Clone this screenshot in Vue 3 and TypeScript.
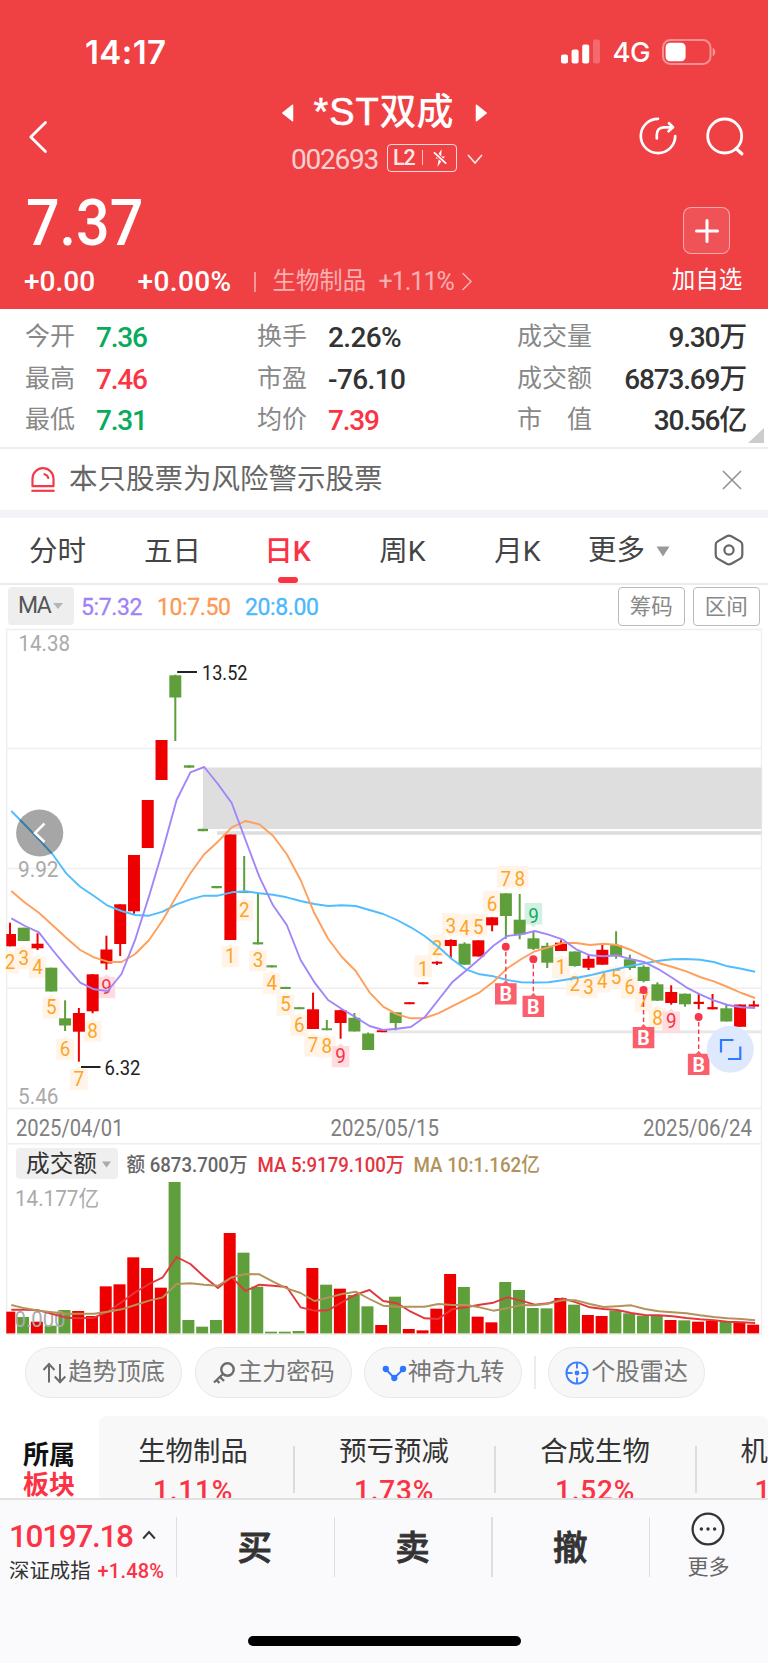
<script setup lang="ts">
type Tone = 'up' | 'down'
// open/close box with wick: [tone, wickTop, bodyTop, bodyBottom, wickBottom]
type Candle = ['r' | 'g', number, number, number, number]

const STEP = 13.775
const candleX = (i: number): number => 10 + i * STEP
const barX = (i: number): number => 9.3 + i * STEP
const lineX = (i: number): number => 11.3 + i * STEP

const stats: { label: string; value: string; tone?: Tone }[][] = [
  [
    { label: '今开', value: '7.36', tone: 'down' },
    { label: '最高', value: '7.46', tone: 'up' },
    { label: '最低', value: '7.31', tone: 'down' },
  ],
  [
    { label: '换手', value: '2.26%' },
    { label: '市盈', value: '-76.10' },
    { label: '均价', value: '7.39', tone: 'up' },
  ],
  [
    { label: '成交量', value: '9.30万' },
    { label: '成交额', value: '6873.69万' },
    { label: '市　值', value: '30.56亿' },
  ],
]

const tabs = ['分时', '五日', '日K', '周K', '月K']
const activeTab = '日K'

const candles: Candle[] = [
  ['r', 922.7, 934, 946.3, 946.3], ['g', 927.7, 927.7, 941, 941], ['r', 933.3, 943.7, 948.3, 950],
  ['g', 967.7, 967.7, 991.5, 991.5], ['g', 1000.3, 1018.3, 1025.5, 1031], ['r', 1008, 1013, 1031.7, 1061.7],
  ['r', 974, 974.3, 1011.3, 1013.3], ['r', 935.7, 949.5, 963.5, 969.7], ['r', 904.3, 904.3, 944, 956],
  ['r', 855, 855, 911.3, 914.3], ['r', 800, 800, 848, 848], ['r', 740, 740, 780, 780],
  ['g', 674.7, 675.3, 697.5, 741], ['g', 765.3, 765.3, 767.7, 767.7], ['g', 828.8, 828.8, 831.2, 831.2],
  ['g', 886, 886, 888.2, 888.2], ['r', 834.5, 834.5, 940, 940], ['g', 856, 891.3, 893, 893],
  ['g', 892.7, 942.2, 944.4, 944.4], ['g', 965.3, 965.3, 967.4, 967.4], ['g', 986.9, 986.9, 989, 989],
  ['g', 1007.2, 1007.2, 1009.2, 1009.2], ['r', 992.7, 1009.3, 1029, 1029], ['g', 1020, 1028.3, 1030.2, 1030.2],
  ['r', 1009.7, 1010.2, 1023, 1038.7], ['g', 1013, 1017.8, 1031.5, 1031.5], ['g', 1032.5, 1033.5, 1050, 1050],
  ['r', 1030, 1030.3, 1032.2, 1032.2], ['g', 1012.3, 1012.3, 1023, 1030.3], ['r', 1002.2, 1002.2, 1004.2, 1004.2],
  ['r', 982.2, 982.2, 984.2, 984.2], ['r', 961.3, 961.7, 963.7, 965], ['r', 939.3, 940, 946, 958.3],
  ['g', 942.3, 943.7, 964.7, 964.7], ['r', 940.3, 940.3, 956.5, 956.5], ['r', 917.3, 917.3, 925.3, 931.3],
  ['g', 893.3, 893.3, 916, 938.8], ['g', 894, 919.7, 934.5, 939.3], ['g', 931.7, 938.3, 948.8, 950],
  ['g', 942.7, 945.8, 962.7, 968], ['r', 940.3, 942.7, 951, 951], ['g', 951.5, 951.5, 966, 966.7],
  ['r', 955, 958.8, 967.7, 970], ['r', 944.3, 949.8, 964.7, 964.7], ['g', 931.3, 945, 956.3, 958.7],
  ['g', 954.7, 959.3, 968, 970], ['g', 965.3, 966.8, 981, 982.3], ['g', 982.3, 984.3, 1000.7, 1001],
  ['r', 985.3, 992, 1003, 1004.7], ['g', 993.5, 993.7, 1004.3, 1006.7], ['r', 993.3, 1001.8, 1004, 1009.3],
  ['r', 994, 1007.1, 1009.3, 1009.3], ['g', 1005, 1008.3, 1021.5, 1021.5], ['r', 1004.5, 1004.5, 1026.8, 1026.8],
  ['r', 1000.7, 1004.4, 1006.6, 1006.6],
]

const ma5 = [918.3, 926, 932.3, 950, 966.7, 982.7, 989.3, 991, 974, 939.3, 896, 850, 800, 772.3, 767, 784, 803, 840, 876.7, 905.3, 925, 960, 982.3, 1000, 1009, 1017.3, 1026, 1030, 1028.7, 1027, 1017.3, 1000, 982.3, 970.7, 958.7, 945.7, 936, 934.3, 931, 934.7, 939.3, 949.3, 955.3, 956.3, 955.3, 959.3, 962.3, 969.3, 978, 987.3, 994.3, 1000.3, 1005, 1007.3, 1008]
const ma10 = [891, 902.7, 912.7, 925.3, 938, 950, 957.3, 961.7, 962, 954, 940, 920, 896, 873.3, 854.3, 841.7, 827.3, 821, 824.3, 835.7, 854.3, 880, 913.3, 938.7, 957, 971, 992.3, 1006.7, 1014.3, 1018.3, 1018, 1013.3, 1006.3, 999.3, 992.3, 981.7, 968.4, 959.3, 951.3, 947.3, 943, 943, 945, 943.7, 945, 950, 956.3, 963, 967, 971.3, 977, 981.3, 987, 993, 998]
const ma20 = [811, 825, 839.3, 854.3, 873.6, 886.7, 896, 905.7, 911, 915, 915.7, 911.7, 904.3, 899.3, 895.7, 895.7, 892.3, 891.3, 893.3, 894.7, 897.3, 901, 904, 906, 905.3, 906, 910, 914, 920, 927.3, 936, 946.7, 959.3, 969.3, 974.3, 976.3, 980, 982.3, 982.5, 982.3, 980.3, 978, 975.3, 972, 969, 965.7, 963.3, 960.7, 959.3, 959, 959.7, 962, 966.3, 968.7, 971.7]

const VOLUME_BASE = 1333.7
// bar heights and averages, in thirds of a pixel below the volume header
const volume = [515, 531, 545, 557, 510, 513, 528, 439, 433, 352, 384, 443, 126, 540, 560, 540, 279, 338, 440, 575, 575, 573, 384, 434, 446, 465, 499, 555, 470, 567, 571, 506, 402, 441, 530, 547, 426, 450, 504, 505, 474, 494, 525, 528, 512, 520, 527, 527, 540, 541, 545, 542, 546, 547, 554]
const volMa5 = [509, 509, 511, 522, 533, 535, 533, 515, 487, 457, 432, 412, 351, 372, 410, 444, 412, 453, 434, 437, 441, 502, 512, 511, 487, 464, 450, 483, 490, 515, 535, 537, 508, 502, 494, 488, 472, 482, 494, 490, 475, 487, 502, 507, 510, 519, 525, 526, 529, 534, 538, 541, 545, 547, 549]
const volMa10 = [495, 505, 512, 517, 521, 521, 521, 515, 508, 495, 482, 472, 432, 430, 434, 437, 412, 402, 403, 425, 445, 459, 483, 473, 462, 455, 477, 497, 500, 500, 500, 492, 495, 495, 502, 512, 505, 495, 496, 491, 481, 481, 492, 501, 499, 496, 507, 514, 517, 520, 526, 531, 535, 537, 541]
const volY = (v: number): number => 1140 + v / 3

const points = (ys: number[]): string => ys.map((y, i) => `${lineX(i).toFixed(1)},${y.toFixed(1)}`).join(' ')

// nine-turn counters: [candle index, digit, centre y, placed above?]
type Turn = [number, number, number, boolean]
const turns: Turn[] = [
  [0, 2, 962, false], [1, 3, 957.3, false], [2, 4, 966.7, false], [3, 5, 1007, false], [4, 6, 1048.3, false],
  [5, 7, 1078.7, false], [6, 8, 1030.3, false], [7, 9, 986.7, false],
  [16, 1, 955.7, false], [17, 2, 909.3, false], [18, 3, 960, false], [19, 4, 982.7, false], [20, 5, 1004, false],
  [21, 6, 1024.7, false], [22, 7, 1045, false], [23, 8, 1046, false], [24, 9, 1055.7, false],
  [30, 1, 968.3, true], [31, 2, 947.7, true], [32, 3, 925.7, true], [33, 4, 927.3, true], [34, 5, 926.7, true],
  [35, 6, 903.7, true], [36, 7, 879, true], [37, 8, 879, true], [38, 9, 916, true],
  [40, 1, 966.7, false], [41, 2, 984, false], [42, 3, 986.7, false], [43, 4, 981, false], [44, 5, 976.7, false],
  [45, 6, 987, false], [46, 7, 1000, false], [47, 8, 1017.3, false], [48, 9, 1021, false],
]
const turnTone = ([, n, , above]: Turn): string => (n !== 9 ? 'count' : above ? 'sell' : 'buy')
const turnBox = ([i, , y, above]: Turn): string => {
  const x = candleX(i)
  const left = Math.max(x - 8.8, 6)
  const right = x + 8.8
  return above
    ? `M${left} ${y - 13}H${right}V${y + 8.6}H${x + 3}L${x} ${y + 11.5}L${x - 3} ${y + 8.6}H${left}Z`
    : `M${left} ${y - 9.6}H${x - 3}L${x} ${y - 12.5}L${x + 3} ${y - 9.6}H${right}V${y + 11.5}H${left}Z`
}

const buys = [
  { i: 36, dot: 946.7, box: 983.3 },
  { i: 38, dot: 959.2, box: 995.7 },
  { i: 46, dot: 990, box: 1027 },
  { i: 50, dot: 1017, box: 1053.8 },
]

const boards = [
  { name: '生物制品', pct: '1.11%' },
  { name: '预亏预减', pct: '1.73%' },
  { name: '合成生物', pct: '1.52%' },
]
const actions = ['买', '卖', '撤']
</script>

<template>
  <div class="app">
    <header class="head">
      <div class="status">
        <span class="clock">14:17</span>
        <div class="status-right">
          <svg class="signal" width="39" height="25" viewBox="0 0 39 25">
            <rect x="0" y="15.5" width="7" height="9" rx="2" />
            <rect x="10.6" y="10.5" width="7" height="14" rx="2" />
            <rect x="21.2" y="5.5" width="7" height="19" rx="2" />
            <rect x="32" y="0.5" width="7" height="24" rx="2" opacity=".22" />
          </svg>
          <span class="net">4G</span>
          <svg class="battery" width="54" height="26" viewBox="0 0 54 26">
            <rect x="1" y="1" width="47.5" height="24" rx="7.5" fill="none" stroke="#fff" stroke-opacity=".42" stroke-width="2" />
            <rect x="3.6" y="3.8" width="20" height="18.4" rx="4.5" fill="#fff" />
            <path d="M50.7 8.8c3.4 1.4 3.4 7 0 8.4z" fill="#fff" fill-opacity=".45" />
          </svg>
        </div>
      </div>

      <div class="nav">
        <svg class="back" width="20" height="34" viewBox="0 0 20 34">
          <path d="M17.5 2.5 2.8 17l14.7 14.5" fill="none" stroke="#fff" stroke-width="2.8" stroke-linecap="round" stroke-linejoin="round" />
        </svg>
        <div class="title-block">
          <div class="title">
            <svg width="12" height="18" viewBox="0 0 12 18"><path d="M.8 9 10.5 1.3v15.4z" fill="#fff" stroke="#fff" stroke-width="1.5" stroke-linejoin="round" /></svg>
            <h1><span>*ST</span>双成</h1>
            <svg width="12" height="18" viewBox="0 0 12 18"><path d="M11.2 9 1.5 1.3v15.4z" fill="#fff" stroke="#fff" stroke-width="1.5" stroke-linejoin="round" /></svg>
          </div>
          <div class="code-row">
            <span class="code">002693</span>
            <span class="level">
              <b>L2</b><i></i>
              <svg width="14" height="18" viewBox="0 0 13 17">
                <path d="M8 .3 2.300 9h3.200L4 16.800 11.200 7H7.600z" fill="#fff" />
                <path d="M.8 3.200 12.400 13.800" stroke="#ef4044" stroke-width="3.600" />
                <path d="M.8 3.200 12.400 13.800" stroke="#fff" stroke-width="1.700" />
              </svg>
            </span>
            <svg width="16" height="11" viewBox="0 0 16 11"><path d="m1.500 1.500 6.500 7.500 6.500-7.500" fill="none" stroke="#fff" stroke-opacity=".85" stroke-width="1.800" stroke-linecap="round" /></svg>
          </div>
        </div>
        <div class="nav-right">
          <svg width="38" height="38" viewBox="0 0 38 38" fill="none" stroke="#fff" stroke-width="2.700" stroke-linecap="round" stroke-linejoin="round">
            <path d="M19 1.800a17.200 17.200 0 1 0 17.200 17.200" />
            <path d="M17.800 21.500v-3.500c0-4.500 2.500-7.700 7-7.700h8" />
            <path d="m30 6.200 4 4.100-4.500 3.900" />
          </svg>
          <svg width="38" height="40" viewBox="0 0 38 40" fill="none" stroke="#fff" stroke-width="2.800" stroke-linecap="round">
            <circle cx="18.700" cy="19" r="17" /><path d="m30 31.500 5.800 5.300" stroke-width="3.200" />
          </svg>
        </div>
      </div>

      <div class="quote">
        <div>
          <div class="price">7.37</div>
          <div class="change">
            <span class="diff">+0.00</span>
            <span class="rate">+0.00%</span>
            <i class="sep"></i>
            <span class="sector">生物制品</span>
            <span class="sector-pct">+1.11%</span>
            <svg width="12" height="19" viewBox="0 0 12 19"><path d="m2 1.500 8 8-8 8" fill="none" stroke="#fff" stroke-opacity=".6" stroke-width="1.500" stroke-linecap="round" /></svg>
          </div>
        </div>
        <div class="watch">
          <span class="plus">
            <svg width="24" height="24" viewBox="0 0 24 24"><path d="M12 1.500v21M1.500 12h21" stroke="#fff" stroke-width="3" stroke-linecap="round" /></svg>
          </span>
          <span class="watch-text">加自选</span>
        </div>
      </div>
    </header>

    <section class="stats">
      <dl v-for="(col, c) in stats" :key="c" :class="'col' + c">
        <div v-for="s in col" :key="s.label">
          <dt>{{ s.label }}</dt>
          <dd :class="s.tone">{{ s.value }}</dd>
        </div>
      </dl>
      <i class="corner"></i>
    </section>

    <section class="alert">
      <svg width="26" height="26" viewBox="0 0 26 26" fill="none" stroke="#f23b4a" stroke-width="2.200">
        <path d="M2.500 19.200V11.700a10.500 10.500 0 0 1 21 0v7.500z" stroke-linejoin="round" />
        <path d="M14.500 7.200c2 .5 3.300 1.800 3.800 3.800" stroke-linecap="round" />
        <path d="M1.400 23.800h23.200" />
      </svg>
      <p>本只股票为风险警示股票</p>
      <svg width="20" height="20" viewBox="0 0 20 20"><path d="m1.500 1.500 17 17m0-17-17 17" stroke="#949494" stroke-width="1.700" stroke-linecap="round" /></svg>
    </section>

    <nav class="tabs">
      <span v-for="t in tabs" :key="t" class="tab" :class="{ active: t === activeTab }">{{ t }}</span>
      <span class="tab more">更多<svg width="14" height="11" viewBox="0 0 14 11"><path d="M.5.500h13L7 10.500z" fill="#999" /></svg></span>
      <svg class="hex" width="30" height="32" viewBox="0 0 30 32" fill="none" stroke="#666" stroke-width="2.200">
        <path d="M12.700 2.200q2.300-1.300 4.600 0l9 5.200q2 1.200 2 3.500v10.200q0 2.300-2 3.500l-9 5.200q-2.300 1.300-4.600 0l-9-5.200q-2-1.200-2-3.500V10.900q0-2.300 2-3.500z" />
        <circle cx="15" cy="16" r="4.600" />
      </svg>
    </nav>

    <div class="ma-row">
      <span class="ma-pick">MA<svg width="10" height="6" viewBox="0 0 10 6"><path d="M0 0h10L5 6z" fill="#b5b5b5" /></svg></span>
      <span class="m5">5:7.32</span>
      <span class="m10">10:7.50</span>
      <span class="m20">20:8.00</span>
      <span class="spacer"></span>
      <span class="btn">筹码</span>
      <span class="btn">区间</span>
    </div>

    <svg class="chart" width="768" height="709" viewBox="0 626 768 709">
      <defs>
        <clipPath id="plot"><rect x="6.300" y="626" width="756" height="708" /></clipPath>
      </defs>
      <path class="grid" d="M6.700 1334V629.500H761.500V1334M6.700 748.500H761.500M6.700 868.500H761.500M6.700 988.300H761.500M6.700 1108.500H761.500M6.700 1143.800H761.500" />

      <g class="bands">
        <rect x="203" y="767.500" width="558.500" height="61.500" />
        <rect x="217" y="831.200" width="544.500" height="3.600" />
        <rect x="383" y="1030.300" width="378.500" height="3" class="faint" />
      </g>

      <g class="axis">
        <text x="18.500" y="651" textLength="51.500" lengthAdjust="spacingAndGlyphs">14.38</text>
        <text x="18" y="877" textLength="40.500" lengthAdjust="spacingAndGlyphs">9.92</text>
        <text x="18" y="1103.500" textLength="40.500" lengthAdjust="spacingAndGlyphs">5.46</text>
      </g>

      <g v-for="(t, k) in turns" :key="'t' + k" :class="turnTone(t)">
        <path :d="turnBox(t)" />
        <text :x="candleX(t[0]) - 5.3" :y="t[2] + 7.2" textLength="10.600" lengthAdjust="spacingAndGlyphs">{{ t[1] }}</text>
      </g>

      <g clip-path="url(#plot)">
        <g v-for="(c, i) in candles" :key="'c' + i" :class="c[0]">
          <rect :x="candleX(i) - 1" :y="c[1]" width="2" :height="c[4] - c[1]" />
          <rect :x="candleX(i) - (c[3] - c[2] < 2.6 ? 5.2 : 6)" :y="c[2]" :width="c[3] - c[2] < 2.6 ? 10.4 : 12" :height="c[3] - c[2]" />
        </g>
      </g>

      <polyline class="line blue" :points="points(ma20)" />
      <polyline class="line orange" :points="points(ma10)" />
      <polyline class="line purple" :points="points(ma5)" />

      <g v-for="b in buys" :key="b.i" class="marker">
        <path :d="`M${candleX(b.i) - 0.1} ${b.dot + 5}V${b.box - 2}`" />
        <circle :cx="candleX(b.i) - 0.1" :cy="b.dot" r="4" />
        <path class="flag" :d="`M${candleX(b.i) - 10.9} ${b.box}h8l2.8-3 2.8 3h8v21.300h-21.600z`" />
        <text :x="candleX(b.i) - 0.1" :y="b.box + 17.8">B</text>
      </g>

      <g class="peak">
        <path d="M177.200 672H197M81 1067H100.500" />
        <text x="202" y="680" textLength="45.500" lengthAdjust="spacingAndGlyphs">13.52</text>
        <text x="104.500" y="1074.500" textLength="36" lengthAdjust="spacingAndGlyphs">6.32</text>
      </g>

      <g>
        <circle cx="39.700" cy="833" r="23.600" fill="#000" fill-opacity=".35" />
        <path d="M44.500 823.500 35 833l9.500 9" fill="none" stroke="#fff" stroke-width="2.500" />
        <circle cx="730.300" cy="1049.300" r="23.500" fill="#dfe9fe" />
        <path d="M733.500 1040H721V1052.500M728 1059H740.300V1046.500" fill="none" stroke="#2e7bff" stroke-width="2.200" />
      </g>

      <g class="dates">
        <text x="16" y="1135.700" textLength="107.500" lengthAdjust="spacingAndGlyphs">2025/04/01</text>
        <text x="330.500" y="1135.700" textLength="108.500" lengthAdjust="spacingAndGlyphs">2025/05/15</text>
        <text x="643" y="1135.700" textLength="109" lengthAdjust="spacingAndGlyphs">2025/06/24</text>
      </g>

      <rect x="16" y="1148" width="102" height="31" rx="4" fill="#efefef" />
      <text class="vol-pick" x="26" y="1171.500" textLength="71">成交额</text>
      <path d="M102 1161.500h9l-4.500 6z" fill="#aaa" />
      <g class="vol-head">
        <text x="126.500" y="1172.200" textLength="121" lengthAdjust="spacingAndGlyphs" fill="#666">额 6873.700万</text>
        <text x="257.500" y="1172.200" textLength="147" lengthAdjust="spacingAndGlyphs" fill="#e5333f">MA 5:9179.100万</text>
        <text x="413.500" y="1172.200" textLength="126.500" lengthAdjust="spacingAndGlyphs" fill="#b0935c">MA 10:1.162亿</text>
      </g>
      <text class="vol-axis" x="15" y="1205.700" textLength="84" lengthAdjust="spacingAndGlyphs">14.177亿</text>

      <g clip-path="url(#plot)">
        <rect
          v-for="(v, i) in volume"
          :key="'v' + i"
          :class="candles[i][0]"
          :x="barX(i) - 6"
          :y="volY(v)"
          width="12"
          :height="VOLUME_BASE - volY(v)"
        />
      </g>
      <path class="grid" d="M6.700 1334.300H761.500" />
      <text class="vol-axis" x="14.500" y="1326.700" textLength="51" lengthAdjust="spacingAndGlyphs">0.000</text>
      <polyline class="line vred" :points="points(volMa5.map(volY))" />
      <polyline class="line vbrown" :points="points(volMa10.map(volY))" />
    </svg>

    <div class="pills">
      <span class="pill">
        <svg width="25" height="24" viewBox="0 0 25 24" fill="none" stroke="#6b6b6b" stroke-width="2"><path d="M7 21.500V3.500M1.500 9 7 3l5.500 6M18 3v18M12.800 15.500 18 21.200l5.300-5.700" /></svg>
        <span>趋势顶底</span>
      </span>
      <span class="pill">
        <svg width="25" height="24" viewBox="0 0 25 24" fill="none" stroke="#6b6b6b" stroke-width="2.400"><circle cx="15.500" cy="8.500" r="6.200" /><path d="M11 13 2 21.500M8 16l4 4M4.500 19l3 3" /></svg>
        <span>主力密码</span>
      </span>
      <span class="pill">
        <svg width="25" height="24" viewBox="0 0 25 24" fill="#2e75ff" stroke="#2e75ff" stroke-width="1.900"><path d="M4 8.500 12.300 17l8.700-8.500" fill="none" /><circle cx="3.800" cy="8" r="2.200" /><circle cx="12.300" cy="17" r="2.200" /><circle cx="21" cy="8" r="2.200" /></svg>
        <span>神奇九转</span>
      </span>
      <i class="pill-sep"></i>
      <span class="pill">
        <svg width="25" height="24" viewBox="0 0 25 24" fill="none" stroke="#3d7fff" stroke-width="1.900"><circle cx="12" cy="12" r="10.600" /><path d="M12 1.500v6M12 16.500v6M1.500 12h6M16.500 12h6" /><circle cx="12" cy="12" r="1.500" fill="#2e75ff" /></svg>
        <span>个股雷达</span>
      </span>
    </div>

    <section class="boards">
      <div class="boards-label"><b>所属</b><b class="red">板块</b></div>
      <div class="boards-panel">
        <div v-for="b in boards" :key="b.name" class="board">
          <span>{{ b.name }}</span><em>{{ b.pct }}</em>
        </div>
        <div class="board partial"><span>机</span><em>1</em></div>
      </div>
    </section>

    <footer class="foot">
      <div class="foot-row">
        <div class="index">
          <div class="index-top">10197.18<svg width="14" height="10" viewBox="0 0 14 10"><path d="m1.200 8.500 5.800-6.500 5.800 6.500" fill="none" stroke="#333" stroke-width="2" /></svg></div>
          <div class="index-sub">深证成指<em>+1.48%</em></div>
        </div>
        <div v-for="a in actions" :key="a" class="action">{{ a }}</div>
        <div class="foot-more">
          <svg width="34" height="34" viewBox="0 0 34 34"><circle cx="17" cy="17" r="15.400" fill="none" stroke="#333" stroke-width="2.300" /><g fill="#333"><circle cx="10.400" cy="17" r="1.700" /><circle cx="17" cy="17" r="1.700" /><circle cx="23.600" cy="17" r="1.700" /></g></svg>
          <span>更多</span>
        </div>
      </div>
      <i class="home"></i>
    </footer>
  </div>
</template>

<style>
body {
  margin: 0;
  background: #fff;
}
</style>

<style scoped>
.app {
  width: 768px;
  height: 1663px;
  overflow: hidden;
  display: flex;
  flex-direction: column;
  background: #fff;
  color: #333;
  font-family: Roboto, "Noto Sans CJK SC", sans-serif;
  white-space: nowrap;
}
.app * {
  box-sizing: border-box;
}
svg {
  flex: none;
  display: block;
}
em, i {
  font-style: normal;
}

/* header */
.head {
  height: 309px;
  flex: none;
  background: #ef4044;
  color: #fff;
}
.status {
  height: 90px;
  padding: 13px 52px 0 85px;
  display: flex;
  justify-content: space-between;
  align-items: center;
}
.clock {
  font: 600 33px/40px Inter, sans-serif;
  letter-spacing: 0.4px;
}
.status-right {
  display: flex;
  align-items: center;
}
.signal {
  fill: #fff;
}
.net {
  font: 500 27.5px/34px Inter, sans-serif;
  letter-spacing: -0.5px;
  margin: 0 12px 0 12px;
}
.nav {
  height: 90px;
  display: grid;
  grid-template-columns: 1fr 220px 1fr;
}
.back {
  margin: 30px 0 0 28px;
}
.title {
  height: 45px;
  display: flex;
  align-items: center;
  justify-content: center;
  gap: 20px;
}
.title h1 {
  margin: 0;
  font-size: 37px;
  line-height: 49px;
  font-weight: 500;
  width: 141px;
  display: flex;
}
.title h1 span {
  font-family: "Liberation Sans", sans-serif;
  font-weight: 400;
  font-size: 38px;
  -webkit-text-stroke: 0.6px #fff;
  letter-spacing: 0.9px;
}
.code-row {
  height: 46px;
  display: flex;
  align-items: center;
  padding: 2px 0 0 17px;
}
.code {
  font-size: 28px;
  letter-spacing: -1.25px;
  width: 96px;
  opacity: .75;
}
.level {
  width: 70px;
  height: 28px;
  margin: -3px 10px 0 0;
  border: 1.5px solid rgba(255, 255, 255, .8);
  border-radius: 4px;
  display: flex;
  align-items: center;
  padding-left: 5px;
}
.level b {
  font-size: 21.5px;
  font-weight: 500;
  letter-spacing: -1.2px;
  width: 29px;
  color: rgba(255, 255, 255, .9);
}
.level i {
  width: 1px;
  height: 15px;
  margin-right: 10px;
  background: rgba(255, 255, 255, .7);
}
.nav-right {
  display: flex;
  align-items: flex-start;
  justify-content: flex-end;
  gap: 29px;
  padding: 27px 24px 0 0;
}
.quote {
  display: flex;
  justify-content: space-between;
}
.price {
  height: 85px;
  line-height: 88px;
  font-size: 64px;
  font-weight: 500;
  padding-left: 26px;
  transform: scaleX(.925);
  transform-origin: 25px 0;
}
.change {
  display: flex;
  align-items: center;
  height: 33px;
  line-height: 33px;
  padding-left: 24px;
}
.diff, .rate {
  font-size: 28px;
  font-weight: 500;
}
.diff {
  width: 113.5px;
}
.rate {
  width: 116.5px;
  letter-spacing: 0.4px;
}
.sep {
  width: 1.5px;
  height: 20px;
  background: rgba(255, 255, 255, .45);
  margin-right: 17px;
}
.sector {
  font-size: 23.4px;
  width: 106px;
  opacity: .58;
}
.sector-pct {
  font-size: 25px;
  letter-spacing: -1px;
  width: 82px;
  opacity: .58;
}
.watch {
  width: 82px;
  margin-right: 20px;
  padding-top: 27px;
  display: flex;
  flex-direction: column;
  align-items: center;
}
.plus {
  width: 47px;
  height: 47px;
  margin-left: -1px;
  border: 1.5px solid rgba(255, 255, 255, .5);
  border-radius: 8px;
  background: rgba(255, 255, 255, .1);
  display: grid;
  place-items: center;
}
.watch-text {
  font-size: 23.5px;
  line-height: 34px;
  margin-top: 9px;
}

/* stats */
.stats {
  position: relative;
  height: 140px;
  flex: none;
  display: flex;
  padding: 8px 22px 0 25px;
  border-bottom: 2px solid #eee;
}
.stats dl {
  margin: 0;
}
.stats dl div {
  display: flex;
  height: 41.5px;
  line-height: 41.5px;
}
.stats dt {
  font-size: 25px;
  color: #888;
  width: 71px;
  margin-top: -1px;
}
.stats dd {
  margin: 0;
  font-size: 28px;
  font-weight: 500;
  letter-spacing: -1.2px;
  color: #333;
}
.stats .up {
  color: #fb3345;
}
.stats .down {
  color: #07ab5c;
}
.col0 {
  width: 232px;
}
.col1 {
  width: 260px;
}
.col1 dd:not(.up) {
  letter-spacing: -0.6px;
}
.col2 {
  flex: 1;
}
.col2 dd {
  flex: 1;
  text-align: right;
}
.corner {
  position: absolute;
  right: 4px;
  bottom: 4px;
  border-left: 16px solid transparent;
  border-bottom: 15px solid #ccc;
}

/* alert */
.alert {
  height: 69px;
  flex: none;
  display: flex;
  align-items: center;
  padding: 0 26px 0 30px;
  border-bottom: 8px solid #f3f4f9;
}
.alert p {
  flex: 1;
  margin: 1px 0 0 13px;
  font-size: 28.5px;
  line-height: 40px;
  color: #666;
}

/* tabs */
.tabs {
  height: 67px;
  flex: none;
  display: grid;
  grid-template-columns: 115px 115px 115px 115px 115px 132px 1fr;
  border-bottom: 2px solid #ebebeb;
}
.tab {
  font-size: 28.5px;
  line-height: 68px;
  height: 65px;
  text-align: center;
  color: #444;
}
.active {
  color: #fb3345;
  font-weight: 500;
  position: relative;
}
.active::after {
  content: "";
  position: absolute;
  left: 47.5px;
  bottom: 0;
  width: 20px;
  height: 6px;
  border-radius: 3px;
  background: #fb3345;
}
.more {
  display: flex;
  align-items: center;
  padding-left: 13px;
}
.more svg {
  margin: 2px 0 0 11px;
}
.hex {
  margin: 16px 0 0 7px;
}

/* moving-average row */
.ma-row {
  height: 41px;
  flex: none;
  display: flex;
  align-items: flex-start;
  padding: 1.5px 8px 0 8px;
  font-size: 23px;
  line-height: 41px;
  letter-spacing: -0.4px;
}
.ma-pick {
  display: flex;
  align-items: center;
  width: 66px;
  height: 38.5px;
  padding-left: 10px;
  border-radius: 4px;
  background: #eee;
  color: #555;
  letter-spacing: -1.5px;
  margin-right: 7px;
}
.ma-pick svg {
  margin-left: 3px;
}
.m5, .m10, .m20 {
  -webkit-text-stroke: 0.3px currentColor;
}
.m5 {
  width: 76px;
  color: #a082f5;
}
.m10 {
  width: 88px;
  color: #fc9850;
}
.m20 {
  color: #4bb8fb;
}
.spacer {
  flex: 1;
}
.btn {
  width: 67.5px;
  height: 39px;
  margin-left: 7.5px;
  border: 1.6px solid #bbb;
  border-radius: 4px;
  text-align: center;
  font-size: 21.5px;
  line-height: 37px;
  letter-spacing: 0;
  color: #888;
}

/* chart */
.chart {
  font-family: Roboto, "Noto Sans CJK SC", sans-serif;
}
.grid {
  fill: none;
  stroke: #eee;
  stroke-width: 1.4;
}
.bands {
  fill: #dedede;
}
.faint {
  fill: #e8e8e8;
}
.axis text, .vol-axis {
  font-size: 22px;
  fill: #aaa;
}
.r {
  fill: #ee0000;
}
.g {
  fill: #5f9f3b;
}
.line {
  fill: none;
  stroke-width: 1.9;
  stroke-linejoin: round;
}
.blue {
  stroke: #50bdff;
}
.orange {
  stroke: #ff9f5b;
}
.purple {
  stroke: #a285f8;
}
.vred {
  stroke: #e2383d;
}
.vbrown {
  stroke: #b3935a;
}
.count path {
  fill: #fff4e7;
}
.count text {
  fill: #fda426;
}
.buy path {
  fill: #ffdcdf;
}
.buy text {
  fill: #f63247;
}
.sell path {
  fill: #d3f0e2;
}
.sell text {
  fill: #10ad66;
}
.count text, .buy text, .sell text {
  font-size: 20.5px;
}
.marker path {
  fill: none;
  stroke: #f8364a;
  stroke-width: 1.4;
  stroke-dasharray: 4.5 3;
}
.marker circle {
  fill: #f8364a;
}
.marker .flag {
  fill: #fb5f6c;
  stroke: none;
}
.marker text {
  fill: #fff;
  font-size: 19.5px;
  font-weight: 700;
  text-anchor: middle;
}
.peak path {
  stroke: #222;
  stroke-width: 2;
}
.peak text {
  font-size: 20px;
  fill: #222;
}
.dates text {
  font-size: 23px;
  fill: #808080;
}
.vol-pick {
  font-size: 23.7px;
  fill: #333;
}
.vol-head {
  font-size: 20px;
  font-weight: 500;
}

/* pills */
.pills {
  height: 81px;
  flex: none;
  padding: 12px 25px 0;
  display: flex;
  gap: 12.4px;
}
.pill {
  width: 157.3px;
  height: 51px;
  flex: none;
  border: 1.4px solid #e8e8e8;
  border-radius: 26px;
  background: #f7f7f7;
  display: flex;
  align-items: center;
  justify-content: center;
  gap: 1px;
  font-size: 24.2px;
  line-height: 46px;
  color: #777;
}
.pill span {
  margin-top: -1px;
}
.pill-sep {
  width: 1.5px;
  height: 33px;
  margin: 9px 0 0 0;
  background: #ececec;
}

/* boards */
.boards {
  height: 82px;
  flex: none;
  display: flex;
  overflow: hidden;
}
.boards-label {
  width: 98.5px;
  flex: none;
  padding: 24px 0 0 23px;
}
.boards-label b {
  display: block;
  font-size: 26px;
  line-height: 30px;
  color: #111;
}
.boards-label .red {
  color: #fb3345;
}
.boards-panel {
  width: 669px;
  display: flex;
  overflow: hidden;
  border-radius: 7px 7px 0 0;
  background: #f8f8f8;
}
.board {
  width: 201px;
  flex: none;
  height: 120px;
  display: flex;
  flex-direction: column;
  align-items: center;
  position: relative;
}
.board:first-child {
  margin-left: -6px;
}
.board::after {
  content: "";
  position: absolute;
  right: -1px;
  top: 30px;
  width: 1.5px;
  height: 47px;
  background: #ddd;
}
.board span {
  font-size: 27.4px;
  line-height: 40px;
  margin-top: 16px;
}
.board em {
  font-size: 28px;
  font-weight: 500;
  line-height: 38px;
  letter-spacing: 0.8px;
  color: #fb3345;
}
.partial {
  align-items: flex-start;
  padding-left: 45px;
}
.partial em {
  padding-left: 14px;
}

/* footer */
.foot {
  flex: 1;
  border-top: 2px solid #e1e1e4;
  background: #fafafd;
}
.foot-row {
  height: 95px;
  display: grid;
  grid-template-columns: 176px 157.7px 157.7px 157.6px 1fr;
}
.index {
  padding: 17px 0 0 9px;
}
.index-top {
  display: flex;
  align-items: center;
  height: 38px;
  font-size: 31.5px;
  font-weight: 500;
  letter-spacing: -1.3px;
  color: #fb3345;
}
.index-top svg {
  margin: -3px 0 0 9px;
}
.index-sub {
  font-size: 20.4px;
  line-height: 33px;
}
.index-sub em {
  color: #fb3345;
  font-size: 20px;
  font-weight: 500;
  letter-spacing: 0.2px;
  margin-left: 7px;
}
.action {
  position: relative;
  text-align: center;
  font-size: 34.5px;
  font-weight: 500;
  line-height: 97px;
  -webkit-text-stroke: 0.8px currentColor;
}
.action::before, .foot-more::before {
  content: "";
  position: absolute;
  left: 0;
  top: 17px;
  width: 1.4px;
  height: 60px;
  background: #dedee2;
}
.foot-more {
  position: relative;
  display: flex;
  flex-direction: column;
  align-items: center;
  padding-top: 12px;
  font-size: 21px;
  line-height: 30px;
  color: #666;
}
.foot-more span {
  margin-top: 6px;
}
.home {
  display: block;
  width: 273.5px;
  height: 10px;
  margin: 41px 0 0 247.5px;
  border-radius: 5px;
  background: #000;
}
</style>
